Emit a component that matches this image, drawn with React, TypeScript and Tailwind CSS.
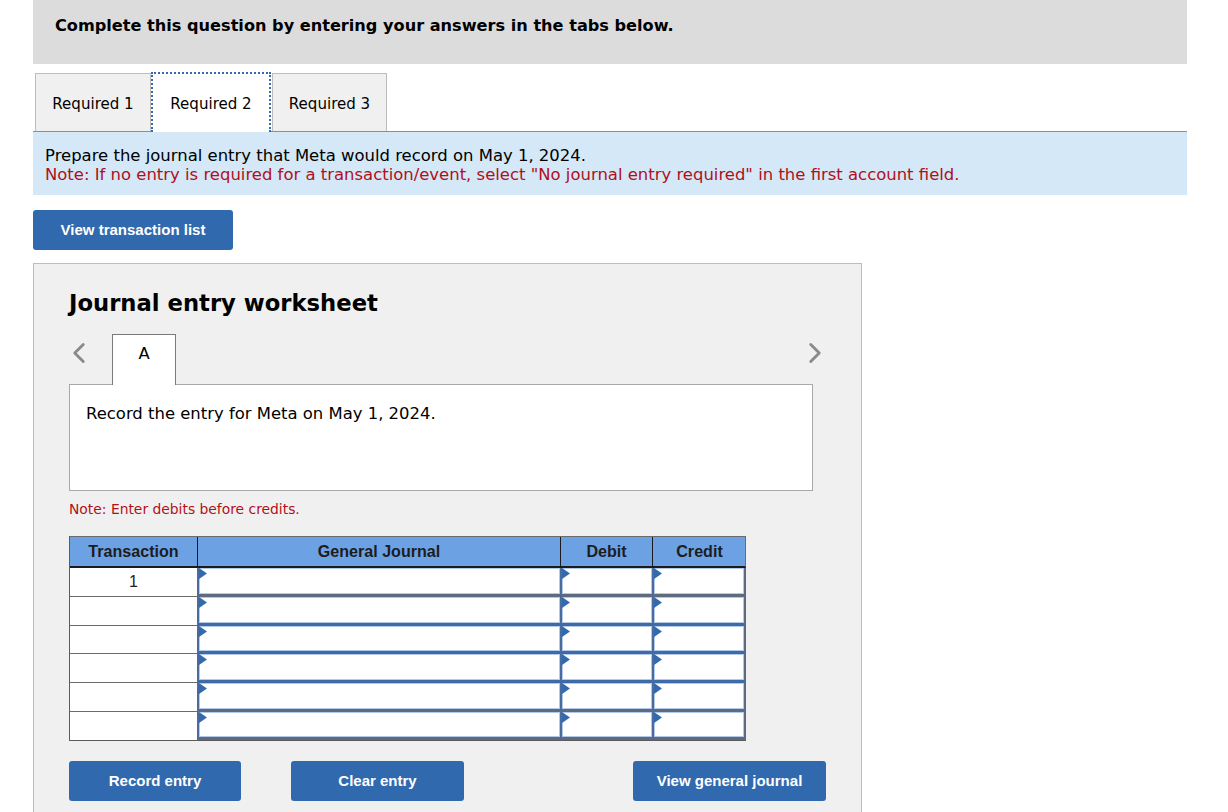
import React from 'react';
import { ChevronLeft, ChevronRight } from 'lucide-react';

const verdana = 'font-["DejaVu_Sans",sans-serif]';
const arial = 'font-["Liberation_Sans",Arial,sans-serif]';

const rowHeights = ['h-[29px]', 'h-[29px]', 'h-[28px]', 'h-[29px]', 'h-[29px]', 'h-[28px]'];
const greyRows = [0, 4, 5];

const InputCell = ({ grey, last }: { grey: boolean; last?: boolean }) => (
  <div className={`relative h-full border-b-[3px] border-l-2 border-l-[#4a6c9c] ${grey ? 'border-b-[#5c6b80]' : 'border-b-[#3e6ba8]'} ${last ? 'border-r-2 border-r-[#5c6b80]' : ''}`}>
    <div className="h-full border border-[#b4c9e8] bg-white" />
    <svg className="absolute left-0 top-0" width="8" height="12" viewBox="0 0 8 12">
      <path d="M0 0 L8 5.5 L0 11 Z" fill="#3369ae" />
    </svg>
  </div>
);

const BlueButton = ({ label, className }: { label: string; className: string }) => (
  <button className={`h-10 rounded-[3px] bg-[#3169ae] pt-px text-center text-[15px] font-bold text-white ${arial} ${className}`}>
    {label}
  </button>
);

export default function App() {
  return (
    <div className={`h-[812px] w-[1228px] overflow-hidden bg-white pl-[33px] text-black ${verdana}`}>
      <div className="h-[64px] w-[1154px] bg-[#dcdcdc] pl-[22px] pt-[16px] text-[16.15px] font-bold leading-[20px]">
        Complete this question by entering your answers in the tabs below.
      </div>

      <div className="mt-[9px] flex h-[59px] w-[1154px] items-end border-b border-[#8e8e8e] pl-[2px] text-[15.05px]">
        <div className="flex h-[58px] w-[116px] items-center justify-center border border-b-0 border-[#bdbdbd] bg-[#f0f0f0] pt-[3px]">Required 1</div>
        <div className="z-10 -mb-px -mt-px flex h-[60px] w-[120px] items-center justify-center border-2 border-b-0 border-dotted border-[#3369ae] bg-white pt-[2px]">Required 2</div>
        <div className="ml-px flex h-[58px] w-[115px] items-center justify-center border border-b-0 border-[#bdbdbd] bg-[#f0f0f0] pt-[3px]">Required 3</div>
      </div>

      <div className="h-[63px] w-[1154px] bg-[#d4e8f7] pl-[12px] pt-[14px] text-[16.47px] leading-[19px]">
        <div>Prepare the journal entry that Meta would record on May 1, 2024.</div>
        <div className="text-[#b0101b]">Note: If no entry is required for a transaction/event, select "No journal entry required" in the first account field.</div>
      </div>

      <BlueButton label="View transaction list" className="mt-[15px] block w-[200px]" />

      <div className="mt-[13px] h-[560px] w-[829px] border border-[#bdbdbd] bg-[#f0f0f0] pl-[35px]">
        <h2 className="pt-[24px] text-[22.7px] font-bold leading-[30px]">Journal entry worksheet</h2>

        <div className="relative mt-[16px] flex h-[50px] w-[744px] items-start">
          <ChevronLeft className="ml-[-7px] mt-[2px] text-[#8a8a8a]" size={34} strokeWidth={2} />
          <div className="z-10 ml-[16px] flex h-[51px] w-[64px] justify-center border border-b-0 border-[#7a7a7a] bg-white pt-[9px] text-[16.4px] leading-[20px]">A</div>
          <ChevronRight className="absolute right-[-19px] top-[2px] text-[#8a8a8a]" size={34} strokeWidth={2} />
        </div>

        <div className="h-[107px] w-[744px] border border-[#a9a9a9] bg-white pl-[16px] pt-[19px] text-[16.44px] leading-[20px]">
          Record the entry for Meta on May 1, 2024.
        </div>

        <p className="mt-[9px] text-[13.86px] leading-[18px] text-[#b0101b]">Note: Enter debits before credits.</p>

        <div className={`mt-[18px] w-[677px] border-b border-l border-[#5c5c5c] ${arial}`}>
          <div className="grid h-[32px] grid-cols-[128px_363px_92px_93px] border-b-2 border-r border-t border-[#6b6b6b] border-b-[#1c1c1c] bg-[#6ca1e3] text-center text-[16.1px] font-bold leading-[29px] text-[#1d1d1d]">
            <div className="border-r border-[#1c1c1c]">Transaction</div>
            <div className="border-r border-[#1c1c1c]">General Journal</div>
            <div className="border-r border-[#1c1c1c]">Debit</div>
            <div>Credit</div>
          </div>
          {rowHeights.map((h, i) => (
            <div key={i} className={`grid grid-cols-[127px_363px_92px_94px] ${h}`}>
              <div className={`bg-white text-center text-[16px] leading-[28px] text-[#222] ${i < 5 ? 'border-b' : ''} border-[#6b6b6b]`}>
                {i === 0 ? '1' : ''}
              </div>
              <InputCell grey={greyRows.includes(i)} />
              <InputCell grey={greyRows.includes(i)} />
              <InputCell grey={greyRows.includes(i)} last />
            </div>
          ))}
        </div>

        <div className="relative mt-[20px] flex w-[757px]">
          <BlueButton label="Record entry" className="w-[172px]" />
          <BlueButton label="Clear entry" className="ml-[50px] w-[173px]" />
          <BlueButton label="View general journal" className="ml-auto w-[193px]" />
        </div>
      </div>
    </div>
  );
}
